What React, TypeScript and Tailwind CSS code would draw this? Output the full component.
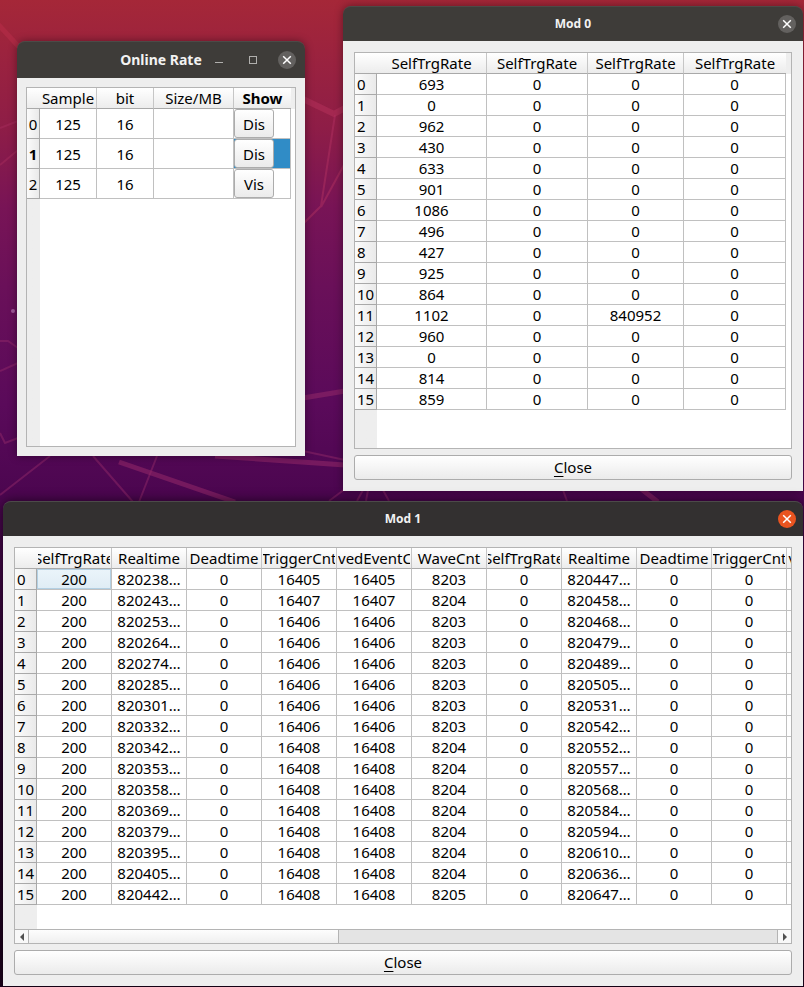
import type { ReactNode } from "react";

const FONT = "font-['Noto_Sans','Open_Sans',sans-serif]";

function CloseButton({ active = false }: { active?: boolean }) {
  return (
    <button
      type="button"
      aria-label="Close window"
      className={`flex size-[18px] items-center justify-center rounded-full ${
        active ? "bg-[#e95420]" : "bg-[#63615f]"
      }`}
    >
      <svg viewBox="0 0 10 10" className="size-2.5" stroke="#fff" strokeWidth="1.5">
        <path d="M1.2 1.2 L8.8 8.8 M8.8 1.2 L1.2 8.8" />
      </svg>
    </button>
  );
}

function HeaderCell({ children, bold = false }: { children: string; bold?: boolean }) {
  return (
    <th
      scope="col"
      className={`h-[21px] overflow-hidden border-r border-b border-r-[#c6c6c6] border-b-[#a9a9a9] bg-linear-to-b from-white to-[#ececec] px-px py-0 last:border-r-0 ${
        bold ? "font-bold" : "font-normal"
      }`}
    >
      <span className="flex h-5 items-center justify-center overflow-hidden whitespace-nowrap">
        <span>{children}</span>
      </span>
    </th>
  );
}

function Corner() {
  return (
    <td className="h-[21px] border-b border-[#a9a9a9] bg-linear-to-b from-white to-[#ececec] p-0" />
  );
}

const ROW_HEAD =
  "border-r border-b border-[#a9a9a9] bg-linear-to-r from-[#fbfbfb] to-[#eaeaea] p-0";
const CELL = "border-r border-b border-[#c0c0c0] bg-white p-0 text-center";

function CloseBar() {
  return (
    <button
      type="button"
      className="h-[25px] w-full rounded-[3px] border border-[#acacac] bg-linear-to-b from-white to-[#ebebeb] leading-[23px]"
    >
      <span className="underline underline-offset-3">C</span>lose
    </button>
  );
}

function DialogTitle({ title, active = false }: { title: string; active?: boolean }) {
  return (
    <header
      className={`grid h-[35px] grid-cols-[1fr_auto_1fr] items-center rounded-t-lg border-t px-[7px] text-[#f2f2f2] ${
        active ? "border-[#4c4a49] bg-[#333030]" : "border-[#4c4a47] bg-[#3e3c39]"
      }`}
    >
      <h2 className="col-start-2 text-xs font-bold">{title}</h2>
      <div className="flex justify-end">
        <CloseButton active={active} />
      </div>
    </header>
  );
}

function Dialog({
  title,
  active,
  children,
}: {
  title: string;
  active?: boolean;
  children: ReactNode;
}) {
  return (
    <>
      <DialogTitle title={title} active={active} />
      <div className="flex flex-col gap-1.5 bg-[#eeeeee] p-[11px]">
        {children}
        <CloseBar />
      </div>
    </>
  );
}

const channels = [
  { rate: "125", bits: "16", action: "Dis" },
  { rate: "125", bits: "16", action: "Dis" },
  { rate: "125", bits: "16", action: "Vis" },
];

function OnlineRate() {
  return (
    <>
      <header className="grid h-[37px] grid-cols-[1fr_auto_1fr] items-center rounded-t-lg border-t border-[#4c4a47] bg-[#3e3c39] px-[9px] text-[#f2f2f2]">
        <h2 className="col-start-2 text-sm font-bold">Online Rate</h2>
        <div className="flex items-center justify-end gap-4">
          <button
            type="button"
            aria-label="Minimize"
            className="flex size-[18px] items-center justify-center"
          >
            <span className="h-1.5 w-2 border-b border-[#b0afad]" />
          </button>
          <button
            type="button"
            aria-label="Maximize"
            className="flex size-[18px] items-center justify-center"
          >
            <span className="size-2 border border-[#b0afad]" />
          </button>
          <CloseButton />
        </div>
      </header>
      <div className="bg-[#eeeeee] p-[9px]">
        <div className="h-[360px] overflow-hidden border border-[#b4b4b4] bg-linear-to-r from-[#eeeeee] from-[13px] to-white to-[13px]">
          <div className="bg-linear-to-b from-[#eeeeee] from-[21px] to-transparent to-[21px]">
            <table className="w-[264px] table-fixed border-separate border-spacing-0">
              <colgroup>
                <col className="w-[13px]" />
                <col className="w-[57px]" />
                <col className="w-[57px]" />
                <col className="w-[80px]" />
                <col className="w-[57px]" />
              </colgroup>
              <thead>
                <tr>
                  <Corner />
                  <HeaderCell>Sample</HeaderCell>
                  <HeaderCell>bit</HeaderCell>
                  <HeaderCell>Size/MB</HeaderCell>
                  <HeaderCell bold>Show</HeaderCell>
                </tr>
              </thead>
              <tbody>
                {channels.map((c, i) => (
                  <tr key={i} className="h-[30px]">
                    <th
                      scope="row"
                      className={`${ROW_HEAD} text-center ${i === 1 ? "font-bold" : "font-normal"}`}
                    >
                      {i}
                    </th>
                    <td className={CELL}>{c.rate}</td>
                    <td className={CELL}>{c.bits}</td>
                    <td className={CELL} />
                    <td className="border-r border-b border-[#c0c0c0] p-0">
                      <div className={`flex h-[29px] ${i === 1 ? "bg-[#308cc6]" : "bg-white"}`}>
                        <button
                          type="button"
                          className="h-full w-10 rounded-[3px] border border-[#acacac] bg-linear-to-b from-white to-[#ebebeb]"
                        >
                          {c.action}
                        </button>
                      </div>
                    </td>
                  </tr>
                ))}
              </tbody>
            </table>
          </div>
        </div>
      </div>
    </>
  );
}

const rates = [693, 0, 962, 430, 633, 901, 1086, 496, 427, 925, 864, 1102, 960, 0, 814, 859];

function ModZero() {
  return (
    <Dialog title="Mod 0">
      <div className="h-[397px] overflow-hidden border border-[#b4b4b4] bg-linear-to-r from-[#eeeeee] from-[22px] to-white to-[22px]">
        <div className="bg-linear-to-b from-[#eeeeee] from-[21px] to-transparent to-[21px]">
          <table className="w-[431px] table-fixed border-separate border-spacing-0">
            <colgroup>
              <col className="w-[22px]" />
              <col className="w-[110px]" />
              <col className="w-[101px]" />
              <col className="w-[96px]" />
              <col className="w-[102px]" />
            </colgroup>
            <thead>
              <tr>
                <Corner />
                <HeaderCell>SelfTrgRate</HeaderCell>
                <HeaderCell>SelfTrgRate</HeaderCell>
                <HeaderCell>SelfTrgRate</HeaderCell>
                <HeaderCell>SelfTrgRate</HeaderCell>
              </tr>
            </thead>
            <tbody>
              {rates.map((rate, i) => (
                <tr key={i} className="h-[21px]">
                  <th scope="row" className={`${ROW_HEAD} pl-0.5 text-left font-normal`}>
                    {i}
                  </th>
                  <td className={CELL}>{rate}</td>
                  <td className={CELL}>0</td>
                  <td className={CELL}>{i === 11 ? 840952 : 0}</td>
                  <td className={CELL}>0</td>
                </tr>
              ))}
            </tbody>
          </table>
        </div>
      </div>
    </Dialog>
  );
}

const counters = [
  "SelfTrgRate",
  "Realtime",
  "Deadtime",
  "TriggerCnt",
  "SavedEventCnt",
  "WaveCnt",
  "SelfTrgRate",
  "Realtime",
  "Deadtime",
  "TriggerCnt",
  "SavedEventCnt",
];

// realtime A, trigger count, wave count, realtime B
const samples: [string, number, number, string][] = [
  ["820238", 16405, 8203, "820447"],
  ["820243", 16407, 8204, "820458"],
  ["820253", 16406, 8203, "820468"],
  ["820264", 16406, 8203, "820479"],
  ["820274", 16406, 8203, "820489"],
  ["820285", 16406, 8203, "820505"],
  ["820301", 16406, 8203, "820531"],
  ["820332", 16406, 8203, "820542"],
  ["820342", 16408, 8204, "820552"],
  ["820353", 16408, 8204, "820557"],
  ["820358", 16408, 8204, "820568"],
  ["820369", 16408, 8204, "820584"],
  ["820379", 16408, 8204, "820594"],
  ["820395", 16408, 8204, "820610"],
  ["820405", 16408, 8204, "820636"],
  ["820442", 16408, 8205, "820647"],
];

function ModOne() {
  return (
    <Dialog title="Mod 1" active>
      <div className="flex h-[397px] flex-col border border-[#b4b4b4] bg-linear-to-r from-[#eeeeee] from-[22px] to-white to-[22px]">
        <div className="min-h-0 flex-1 overflow-hidden">
          <table className="w-[847px] table-fixed border-separate border-spacing-0">
            <colgroup>
              <col className="w-[22px]" />
              {counters.map((_, i) => (
                <col key={i} className="w-[75px]" />
              ))}
            </colgroup>
            <thead>
              <tr>
                <Corner />
                {counters.map((name, i) => (
                  <HeaderCell key={i}>{name}</HeaderCell>
                ))}
              </tr>
            </thead>
            <tbody>
              {samples.map(([realA, trigger, wave, realB], i) => (
                <tr key={i} className="h-[21px]">
                  <th scope="row" className={`${ROW_HEAD} pl-0.5 text-left font-normal`}>
                    {i}
                  </th>
                  {i === 0 ? (
                    <td className="border-r border-b border-[#c0c0c0] p-0 text-center">
                      <div className="h-5 border border-[#b3d0e3] bg-linear-to-b from-[#eaf4fa] to-[#e0edf5] leading-[18px]">
                        200
                      </div>
                    </td>
                  ) : (
                    <td className={CELL}>200</td>
                  )}
                  <td className={CELL}>{realA}…</td>
                  <td className={CELL}>0</td>
                  <td className={CELL}>{trigger}</td>
                  <td className={CELL}>{trigger}</td>
                  <td className={CELL}>{wave}</td>
                  <td className={CELL}>0</td>
                  <td className={CELL}>{realB}…</td>
                  <td className={CELL}>0</td>
                  <td className={CELL}>0</td>
                  <td className={CELL} />
                </tr>
              ))}
            </tbody>
          </table>
        </div>
        <div className="flex h-3.5 border-t border-[#b4b4b4] bg-[#e4e4e4]">
          <button
            type="button"
            aria-label="Scroll left"
            className="flex w-3.5 items-center justify-center border-r border-[#b4b4b4] bg-[#f8f8f8]"
          >
            <svg viewBox="0 0 4 8" className="h-2 w-1" fill="#505050">
              <path d="M4 0V8L0 4Z" />
            </svg>
          </button>
          <div className="w-2/5 border-r border-[#b4b4b4] bg-linear-to-b from-[#fdfdfd] to-[#efefef]" />
          <button
            type="button"
            aria-label="Scroll right"
            className="ml-auto flex w-3.5 items-center justify-center border-l border-[#b4b4b4] bg-[#f8f8f8]"
          >
            <svg viewBox="0 0 4 8" className="h-2 w-1" fill="#505050">
              <path d="M0 0V8L4 4Z" />
            </svg>
          </button>
        </div>
      </div>
    </Dialog>
  );
}

function Wallpaper() {
  return (
    <svg
      viewBox="0 0 804 987"
      preserveAspectRatio="none"
      className="absolute inset-0 size-full"
      fill="none"
      stroke="#8f2768"
      aria-hidden="true"
    >
      <g strokeWidth="5" strokeOpacity="0.6">
        <path d="M-4 22 L20 48" stroke="#b52d48" />
        <path d="M303 99 L334 114 L345 108" stroke="#b02f58" strokeWidth="6" />
        <path d="M303 398 L345 391" />
        <path d="M215 456 L345 465" />
        <path d="M119 462 L235 502" />
        <path d="M640 488 L658 502" />
      </g>
      <g strokeWidth="2" strokeOpacity="0.5">
        <path d="M0 128 L18 121 M0 165 L18 150" stroke="#a52c5c" />
        <path d="M335 115 L321 206 L304 223 M345 163 L321 207" stroke="#b03060" />
        <path d="M0 341 L8 341 L18 348 M0 371 L18 363 M0 433 L5 443 L18 438" />
        <path d="M0 495 L50 456 M93 456 L133 502 M157 456 L139 502 M303 451 L345 460" />
        <path d="M329 501 L345 489 M363 490 L357 501 M368 490 L366 501 M383 490 L389 501 M563 490 L567 501" />
      </g>
      <circle cx="13" cy="311" r="2" fill="#a0589a" stroke="none" />
    </svg>
  );
}

export default function App() {
  return (
    <main
      className={`relative h-screen overflow-hidden bg-[linear-gradient(to_bottom,#a52738_0%,#8e1d47_13%,#781456_21%,#6a1059_29%,#5a0a5a_41%,#4c0650_50%,#2c0430_70%,#1c021c_100%)] text-[15px] leading-5 text-black ${FONT}`}
    >
      <Wallpaper />
      <section
        aria-label="Online Rate"
        className="absolute top-[41px] left-[17px] w-72 rounded-t-lg shadow-[0_0_8px_rgba(0,0,0,0.4)]"
      >
        <OnlineRate />
      </section>
      <section
        aria-label="Mod 0"
        className="absolute top-1.5 right-px w-[460px] rounded-t-lg shadow-[0_0_8px_rgba(0,0,0,0.4)]"
      >
        <ModZero />
      </section>
      <section
        aria-label="Mod 1"
        className="absolute top-[501px] right-px left-[3px] rounded-t-lg shadow-[0_0_12px_rgba(0,0,0,0.6)]"
      >
        <ModOne />
      </section>
    </main>
  );
}
